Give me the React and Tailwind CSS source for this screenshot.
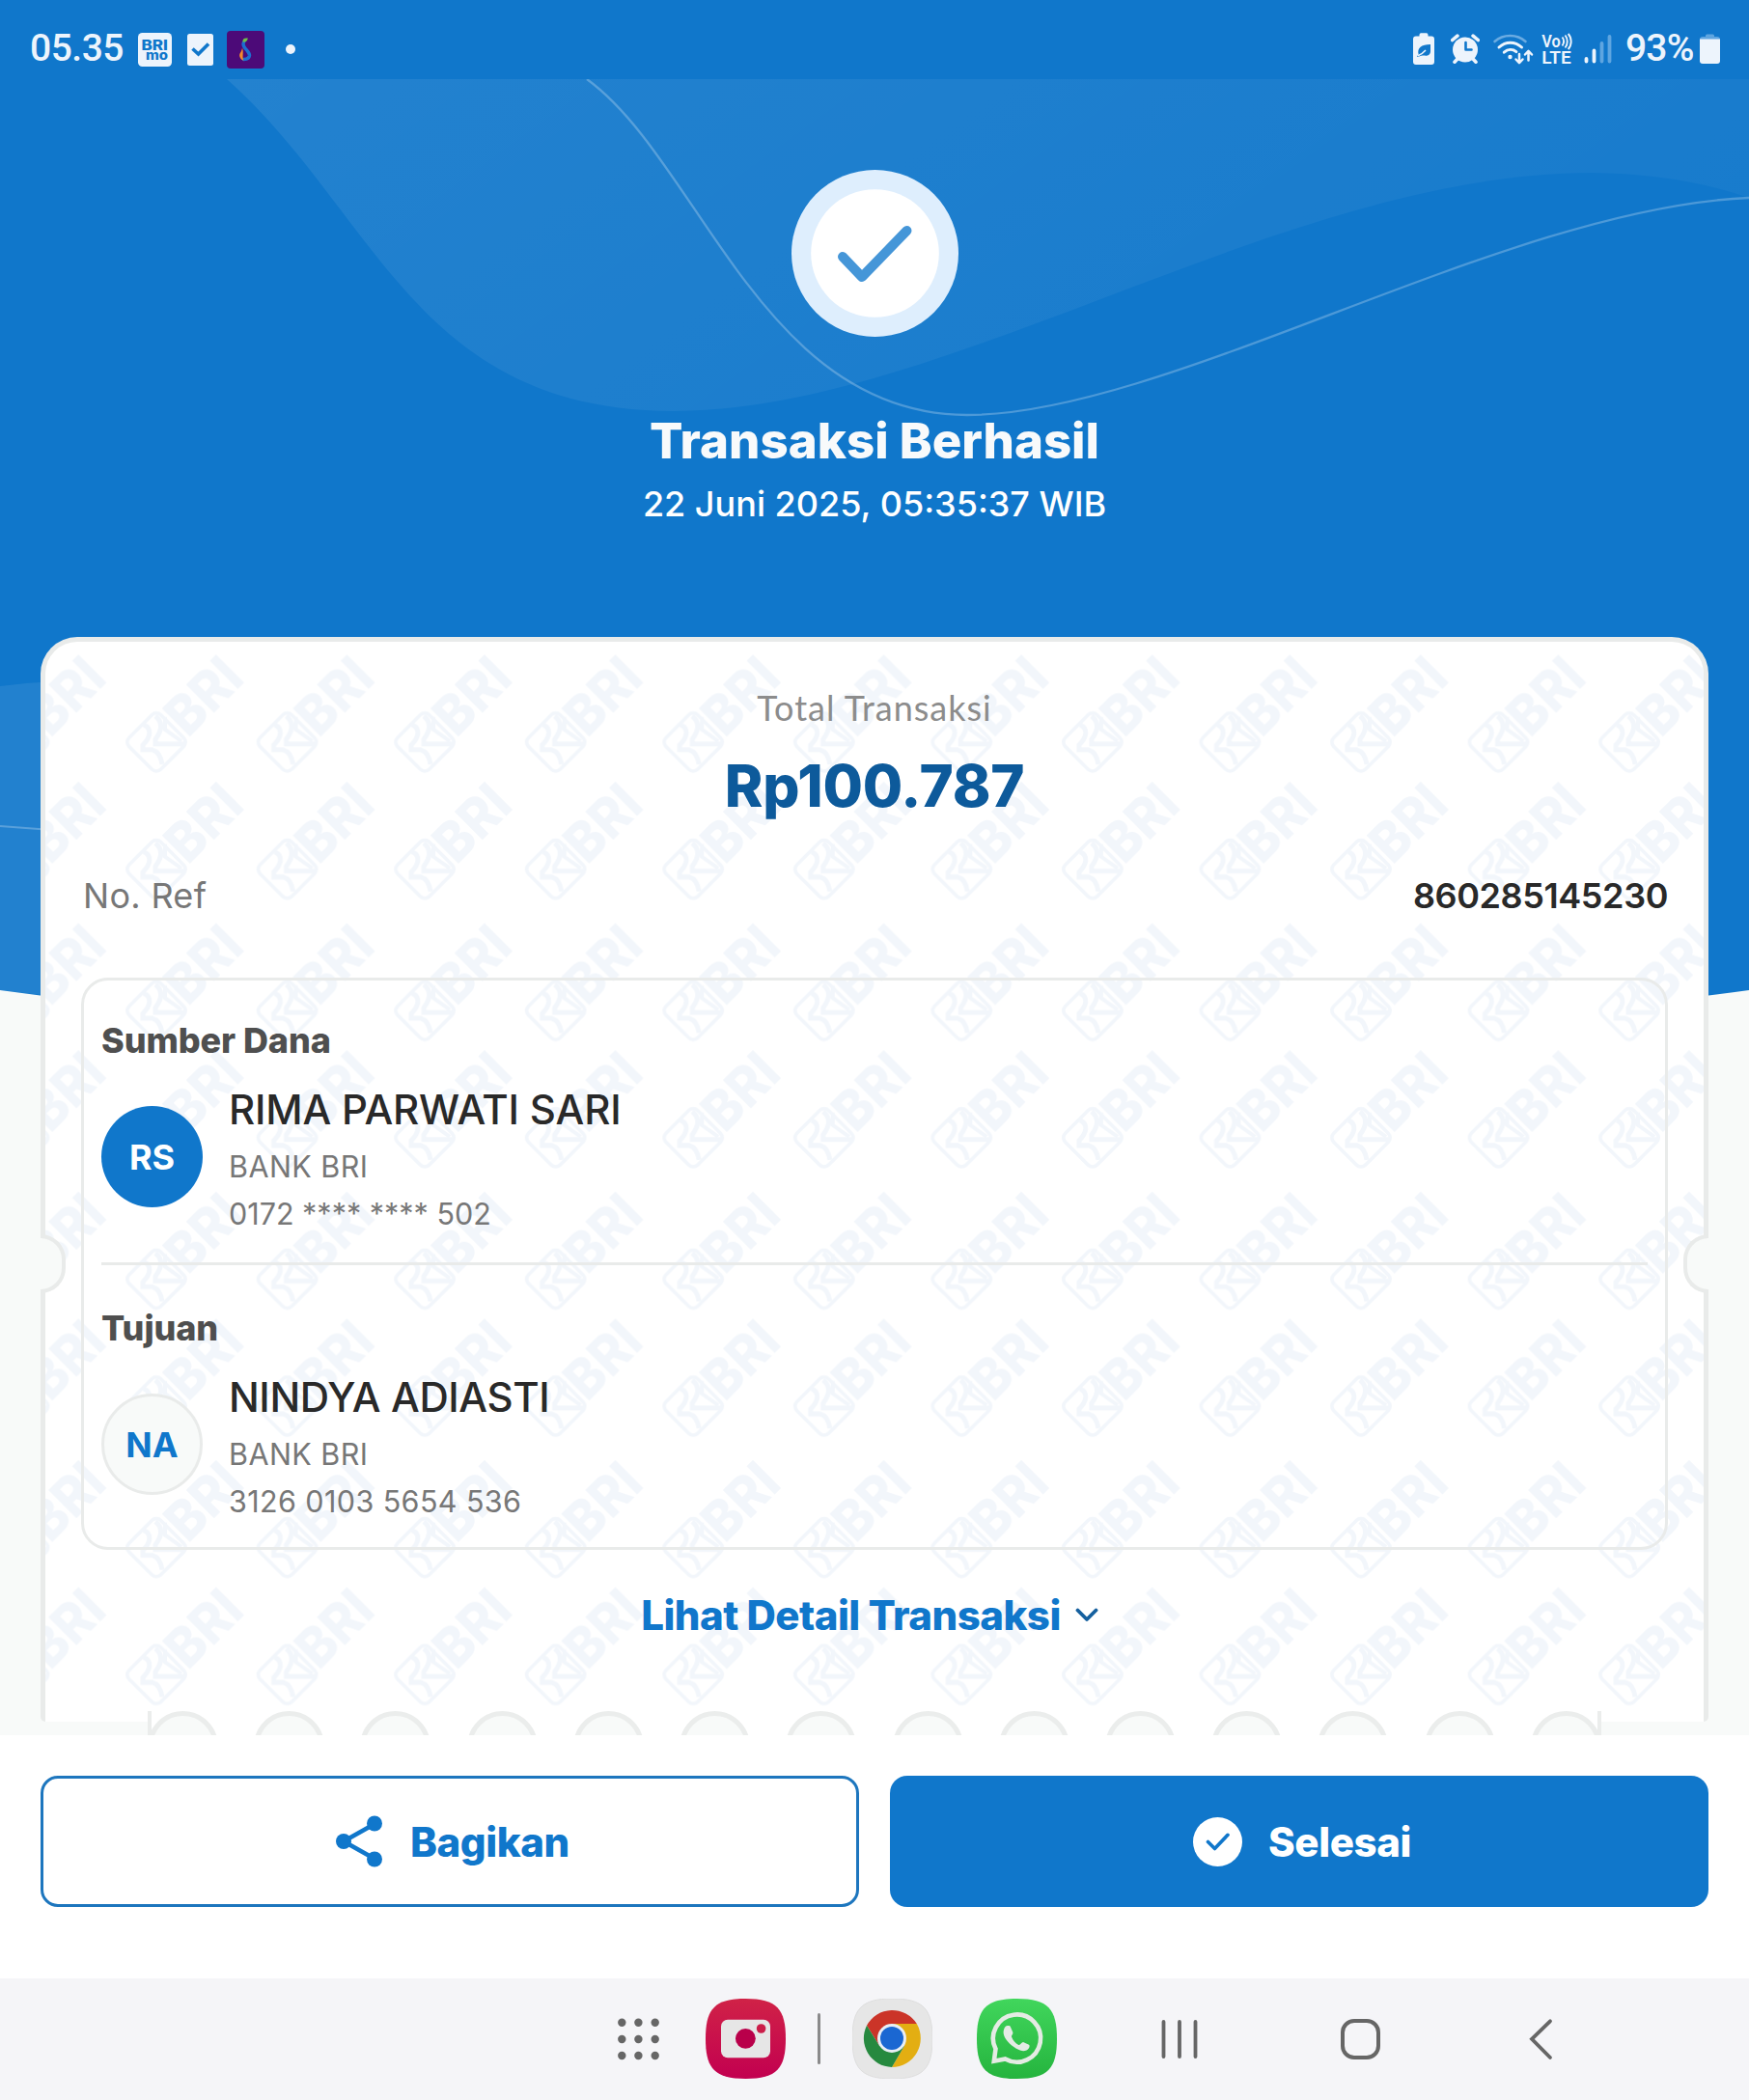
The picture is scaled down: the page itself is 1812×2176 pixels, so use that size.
const INTER = "font-['Inter',sans-serif]";

function StatusBar() {
  return (
    <header className="relative flex h-[82px] items-start bg-[#1077cb] font-['Roboto',sans-serif] text-[#edf4fc]">
      <span className="ml-[31px] mt-[26px] w-[112px] text-[39px] font-medium leading-[48px] tracking-[-0.5px]">05.35</span>
      <svg className="mt-[34px] h-[35px] w-[35px]" viewBox="143 34 35 35">
        <rect x="143" y="34" width="35" height="35" rx="4.5" fill="#edf4fc" />
        <text x="146.4" y="51.600" fontSize="14.500" fontWeight="800" textLength="27.5" lengthAdjust="spacingAndGlyphs" fill="#1077cb" fontFamily="Inter, sans-serif">BRI</text>
        <text x="151" y="62.4" fontSize="13" fontWeight="800" textLength="23" lengthAdjust="spacingAndGlyphs" fill="#1077cb" fontFamily="Inter, sans-serif">mo</text>
      </svg>
      <svg className="ml-4 mt-[35px] h-[33px] w-[27px]" viewBox="194 35 27 33">
        <rect x="194" y="35" width="27" height="33" rx="2.5" fill="#edf4fc" />
        <path d="M199.500 50.500l6 5.500 10.500-10.500" fill="none" stroke="#1077cb" strokeWidth="3.6" />
      </svg>
      <svg className="ml-3.5 mt-8 h-[39px] w-[39px]" viewBox="235 32 39 39">
        <rect x="235" y="32" width="39" height="39" rx="4" fill="#4c0a78" />
        <path d="M252.500 44C249.500 49 259 52.500 258.500 57.500C258 61 255 61.500 252.500 61.500" fill="none" stroke="#1d6fd0" strokeWidth="3.400" strokeLinecap="round" />
        <path d="M251 49.500C250.500 54 247.500 55 248.300 58.500C249 61 251 62.500 252.500 62.500C250.500 59 252.800 55 251 49.500Z" fill="#f58a2c" />
        <path d="M251.500 43.500C251 40.500 253 38.800 256.800 39.600C256.500 42.500 254.500 44 251.500 43.500Z" fill="#6fbf4a" />
      </svg>
      <span className="ml-[22px] mt-[46px] h-2.5 w-2.5 rounded-full bg-[#edf4fc]" />

      <div className="ml-auto flex items-start">
        <svg className="mt-[34px] h-[33px] w-[22px]" viewBox="1463 34 22 33">
          <path d="M1469.500 37.500V36a1.700 1.700 0 0 1 1.700-1.700h5.600a1.700 1.700 0 0 1 1.700 1.700v1.500h3.500a3 3 0 0 1 3 3V64a3 3 0 0 1-3 3h-16a3 3 0 0 1-3-3V40.500a3 3 0 0 1 3-3Z" fill="#edf4fc" />
          <path d="M1481 46v7c0 4-3.500 5.200-6.500 4.600c-2 0-4 .4-6.500 1.400c-.6.200-1.500-.7-.9-1.300l1.600-1.200c-1.800-6.500 2.800-10.500 12.300-10.500Z" fill="#1077cb" />
          <path d="M1467.500 58c3.500-1.500 6-3 8.500-6" fill="none" stroke="#edf4fc" strokeWidth="1.500" />
        </svg>
        <svg className="ml-[17px] mt-[34px] h-[33px] w-[30px]" viewBox="1501.500 34 30 33">
          <circle cx="1516.500" cy="51.500" r="13" fill="#edf4fc" />
          <path d="M1503.200 41.500l5.200-4.400M1529.800 41.500l-5.200-4.400M1508.500 61l-3 3.200M1524.500 61l3 3.200" stroke="#edf4fc" strokeWidth="3.600" strokeLinecap="round" />
          <path d="M1517 44v7.500h6" fill="none" stroke="#1077cb" strokeWidth="2.600" strokeLinecap="round" strokeLinejoin="round" />
        </svg>
        <svg className="ml-[13px] mt-[34px] h-[34px] w-[43px]" viewBox="1544.500 34 43 34" fill="none" strokeLinecap="round" stroke="#edf4fc">
          <path d="M1547 43c9-8 23-8 32 0" stroke="#6aabe2" strokeWidth="2.600" />
          <path d="M1551.500 49c7-6.500 16.500-6.500 23.500 0" strokeWidth="3" />
          <path d="M1556.800 54.200c4-3.400 9-3.400 12.600-.6" strokeWidth="3" />
          <circle cx="1563" cy="59" r="2.200" fill="#edf4fc" stroke="none" />
          <path d="M1572.500 56v8.500M1569 61.500l3.500 3.700 3.500-3.700M1582 62.500v-9M1578.500 56.500l3.500-3.700 3.500 3.700" strokeWidth="2.500" strokeLinejoin="round" />
        </svg>
        <svg className="ml-2 mt-[34px] h-[33px] w-[33px] overflow-visible" viewBox="1595.500 34 33 33" fontFamily="Roboto, sans-serif" fontWeight="600" fill="#edf4fc">
          <text x="1595.800" y="48.500" fontSize="17.500" textLength="19.500" lengthAdjust="spacingAndGlyphs">Vo</text>
          <path d="M1617 38.500c2 2.500 2 6 0 9M1620 36.500c3 3.500 3 9.500 0 13M1623.200 35c4 4.500 4 11.500 0 16" fill="none" stroke="#edf4fc" strokeWidth="1.900" />
          <text x="1595.800" y="66" fontSize="18" textLength="30.500" lengthAdjust="spacingAndGlyphs">LTE</text>
        </svg>
        <svg className="ml-[11px] mt-[35px] h-[31px] w-[29px]" viewBox="1639.500 35 29 31" strokeWidth="3.800" strokeLinecap="round">
          <path d="M1642 61v2.500M1650 52.500v11" stroke="#edf4fc" />
          <path d="M1658 45v18.500M1666 38v25.500" stroke="#5ea5e0" />
        </svg>
        <span className="ml-[14px] mt-[26px] w-[76px] text-[39px] font-medium leading-[48px] tracking-[-0.8px]">93%</span>
        <svg className="ml-[1px] mr-[30px] mt-[35px] h-[31px] w-[21px]" viewBox="1761 35 21 31">
          <path d="M1767 38v-1a1.500 1.500 0 0 1 1.500-1.500h6a1.500 1.500 0 0 1 1.500 1.500v1h3a3 3 0 0 1 3 3h-21a3 3 0 0 1 3-3Z" fill="#5ea5e0" />
          <path d="M1761 40.500h21V63a3 3 0 0 1-3 3h-15a3 3 0 0 1-3-3Z" fill="#edf4fc" />
        </svg>
      </div>
    </header>
  );
}

function HeroBackdrop() {
  return (
    <svg className="absolute left-0 top-0 h-[1100px] w-full" viewBox="0 0 1812 1100" aria-hidden="true">
      <defs>
        <linearGradient id="wave" x1="0" y1="0" x2="1" y2="0.3">
          <stop offset="0" stopColor="#fff" stopOpacity="0.08" />
          <stop offset="1" stopColor="#fff" stopOpacity="0.035" />
        </linearGradient>
      </defs>
      <path d="M0 0H1812V1026Q906 1150 0 1026Z" fill="#1077cb" />
      <path d="M235 82C390 220 430 426 698 426C980 426 1330 179 1650 179Q1740 180 1812 205V82Z" fill="url(#wave)" />
      <path d="M608 82C725 167 790 430 1002 430C1210 430 1560 215 1812 205" fill="none" stroke="#fff" strokeOpacity="0.25" strokeWidth="2.300" />
      <path d="M0 711Q30 707 60 706V1033L0 1026Z" fill="#fff" fillOpacity="0.08" />
      <path d="M0 856L60 860.500" stroke="#fff" strokeOpacity="0.25" strokeWidth="2" />
    </svg>
  );
}

function Watermark() {
  return (
    <svg className="absolute inset-0 h-full w-full" aria-hidden="true">
      <defs>
        <g id="bri-mark">
          <g transform="rotate(-45)">
            <rect x="-23.200" y="-23.200" width="46.400" height="46.400" rx="6.500" fill="none" stroke="#f2f6fb" strokeWidth="3.600" />
            <text x="25.800" y="20.500" fontFamily="Inter, sans-serif" fontWeight="800" fontSize="56.400" textLength="85" lengthAdjust="spacingAndGlyphs" fill="#f2f6fb">BRI</text>
          </g>
          <path d="M-13 -18C-4 -14 -6 -5 -14 3V8H-4C3 10 5 16 6 23" fill="none" stroke="#f2f6fb" strokeWidth="5" />
          <path d="M-1 -27C8 -20 5 -11 -1 -3V2H29" fill="none" stroke="#f2f6fb" strokeWidth="5" />
          <path d="M9 -26V-13L26 -1" fill="none" stroke="#f2f6fb" strokeWidth="4" />
        </g>
        <pattern id="bri-tile" x="70.200" y="7.500" width="278.100" height="278.200" patternUnits="userSpaceOnUse">
          <use href="#bri-mark" x="44.800" y="96.500" />
          <use href="#bri-mark" x="180.400" y="96.500" />
          <use href="#bri-mark" x="44.800" y="228.200" />
          <use href="#bri-mark" x="180.400" y="228.200" />
        </pattern>
      </defs>
      <rect width="100%" height="100%" fill="url(#bri-tile)" />
    </svg>
  );
}

function Party({ title, initials, avatarClass, name, nameClass, account, accountClass }) {
  return (
    <section>
      <h2 className="text-[36px] font-extrabold leading-[44px] tracking-[-0.1px] text-[#4f4f4f]">{title}</h2>
      <div className="mt-6 flex gap-[27px]">
        <div className={`mt-[22px] flex h-[105px] w-[105px] items-center justify-center rounded-full text-[36px] font-bold ${avatarClass}`}>{initials}</div>
        <div className="whitespace-nowrap">
          <p className={`text-[42px] font-medium leading-[52px] text-[#292929] ${nameClass}`}>{name}</p>
          <p className="mt-[13px] text-[30.500px] leading-[40px] tracking-[0.45px] text-[#777]">BANK BRI</p>
          <p className={`mt-[9px] text-[30.500px] leading-[40px] text-[#777] ${accountClass}`}>{account}</p>
        </div>
      </div>
    </section>
  );
}

function Receipt() {
  return (
    <main className="relative mx-[42px] h-[1124px] overflow-hidden rounded-b-[5px] rounded-t-[38px] border-x-[5px] border-t-[5px] border-[#e9ebea] bg-white">
      <Watermark />
      <div className="relative px-[37px] pt-[45px]">
        <p className="text-center font-['Lato',sans-serif] text-[36px] leading-[46px] tracking-[1px] text-[#8c8c8c]">Total Transaksi</p>
        <p className="mt-5 text-center text-[60px] font-extrabold leading-[76px] tracking-[-0.2px] text-[#0d5a9b]">Rp100.787</p>
        <div className="mt-[54px] flex justify-between pl-[2px] leading-[44px]">
          <span className="text-[36px] tracking-[0.3px] text-[#777]">No. Ref</span>
          <span className="text-[36px] font-semibold tracking-[-0.4px] text-[#292929]">860285145230</span>
        </div>
        <div className="mt-[63px] h-[593px] rounded-[28px] border-[3px] border-[#e9ebea] px-[18px] pt-10">
          <Party title="Sumber Dana" initials="RS" avatarClass="bg-[#1077cb] text-white" name="RIMA PARWATI SARI" nameClass="tracking-[-0.2px]" account="0172 **** **** 502" accountClass="" />
          <div className="mb-[43px] mt-[30px] h-[3px] bg-[#e9ebea]" />
          <Party title="Tujuan" initials="NA" avatarClass="border-[3px] border-[#e9ebea] bg-[#f8faf9] text-[#1077cb]" name="NINDYA ADIASTI" nameClass="tracking-[-0.4px]" account="3126 0103 5654 536" accountClass="tracking-[0.4px]" />
        </div>
        <button className="relative -left-[5px] mx-auto mt-[43px] flex items-center gap-[15px] text-[42px] font-extrabold leading-[50px] tracking-[-0.5px] text-[#1077cb]">
          Lihat Detail Transaksi
          <svg className="h-4 w-6" viewBox="0 0 24 16" fill="none" stroke="#15609f" strokeWidth="3.800" strokeLinecap="round" strokeLinejoin="round">
            <path d="M2.500 2.500l9.500 9.500 9.500-9.500" />
          </svg>
        </button>
      </div>
    </main>
  );
}

function Perforation() {
  return (
    <div className="absolute left-[153px] right-[153px] top-[1773px] flex h-[25px] items-start justify-between overflow-hidden bg-white shadow-[inset_4px_0_0_#ebedec,inset_-4px_0_0_#ebedec]">
      {Array.from({ length: 14 }, (_, i) => (
        <span key={i} className="h-[73px] w-[73px] rounded-full border-[5px] border-[#ebedec] bg-[#f8faf9]" />
      ))}
    </div>
  );
}

function Squircle({ fill, stroke }) {
  return <path d="M41.500 0C74 0 83 11 83 41.500S74 83 41.500 83 0 72 0 41.500 9 0 41.500 0Z" fill={fill} stroke={stroke} />;
}

function NavBar() {
  return (
    <nav className="relative flex h-[126px] bg-[#f5f5f8]">
      <svg className="ml-[638px] mt-[39px] h-12 w-12" viewBox="638 2089 48 48" fill="#666">
        {[2095.7, 2113, 2130].map((y) => [644.3, 661.4, 678.7].map((x) => <circle key={`${x}-${y}`} cx={x} cy={y} r="4.200" />))}
      </svg>
      <svg className="ml-[45px] mt-[21px] h-[83px] w-[83px]" viewBox="0 0 83 83">
        <defs>
          <linearGradient id="cam" x1="0" y1="0" x2="0" y2="1">
            <stop offset="0" stopColor="#d02247" />
            <stop offset="1" stopColor="#c20050" />
          </linearGradient>
        </defs>
        <Squircle fill="url(#cam)" />
        <rect x="16" y="21.700" width="51" height="39.500" rx="7" fill="#e6e6e6" />
        <circle cx="41.400" cy="41.300" r="10.400" fill="#b9004a" />
        <circle cx="57.600" cy="31" r="4.800" fill="#cb1d49" />
      </svg>
      <span className="ml-[33px] mt-9 h-[53px] w-[3px] rounded-full bg-[#8a8a8b]" />
      <svg className="ml-[33px] mt-[21px] h-[83px] w-[83px]" viewBox="0 0 83 83">
        <Squircle fill="#e6e6e6" stroke="#dedede" />
        <path d="M15 27.700A30 30 0 0 1 66.800 26H41L28 48.700Z" fill="#cb3428" />
        <path d="M66.800 26A30 30 0 0 1 41 71L54 48.700L41 26Z" fill="#e3ae12" />
        <path d="M41 71A30 30 0 0 1 15 27.700L28 48.700H54Z" fill="#26893f" />
        <circle cx="41" cy="41" r="15" fill="#e9eef5" />
        <circle cx="41" cy="41" r="12" fill="#1a67d2" />
      </svg>
      <svg className="ml-[46px] mt-[21px] h-[83px] w-[83px]" viewBox="0 0 83 83">
        <defs>
          <linearGradient id="wa" x1="0" y1="0" x2="0" y2="1">
            <stop offset="0" stopColor="#41d65c" />
            <stop offset="1" stopColor="#25b43e" />
          </linearGradient>
        </defs>
        <Squircle fill="url(#wa)" />
        <path d="M19.500 52A24.600 24.600 0 1 1 29.500 62.500L17.800 64.700Z" fill="none" stroke="#e4ebe4" strokeWidth="4.600" />
        <path d="M27.600 34C28 30.500 29.500 28.300 31.500 28C33.500 27.700 34.500 28 35 29.500L37.400 35C37.800 36.500 35.500 38.500 36 39.500C37.500 43.500 40 46 43.300 48C45 48.800 46.500 44.500 48.500 45.200L54 47.800C55.500 49 54 52.500 51.500 53.500C47 55.500 42.500 53 38 49.800C32.500 46 27 39.500 27.600 34Z" fill="#e4ebe4" />
      </svg>
      <svg className="ml-[107px] mt-[42px] h-[42px] w-[40px]" viewBox="1202 2092 40 42" stroke="#666" strokeWidth="3.800" strokeLinecap="round">
        <path d="M1205.500 2095v36M1222 2095v36M1238.500 2095v36" />
      </svg>
      <span className="ml-[147px] mt-[42px] h-[42px] w-[41px] rounded-[14px] border-[4px] border-[#666]" />
      <svg className="ml-[153px] mt-[41px] h-[44px] w-[28px]" viewBox="1583 2091 28 44" fill="none" stroke="#666" strokeWidth="3.800" strokeLinecap="round">
        <path d="M1606 2094.300L1587 2112.800L1606 2132" />
      </svg>
    </nav>
  );
}

export default function App() {
  return (
    <div className={`relative flex h-[2176px] w-[1812px] flex-col overflow-hidden bg-[#f8faf9] ${INTER}`}>
      <HeroBackdrop />
      <StatusBar />
      <div className="relative flex h-[578px] flex-col items-center text-white">
        <svg className="mt-[94px] h-[173px] w-[173px]" viewBox="0 0 173 173">
          <circle cx="86.500" cy="86.500" r="86.500" fill="#deeefd" />
          <circle cx="86.500" cy="86.500" r="66.300" fill="#fff" />
          <path d="M53 90l20 21L119.500 63" fill="none" stroke="#4596d8" strokeWidth="10" strokeLinecap="round" strokeLinejoin="round" />
        </svg>
        <h1 className="mt-[77px] text-[51px] font-extrabold leading-[62px] text-[#f8fafb]">Transaksi Berhasil</h1>
        <p className="mt-3 text-[36px] font-[450] leading-[44px]">22 Juni 2025, 05:35:37 WIB</p>
      </div>
      <Receipt />
      <span className="absolute left-[42px] top-[1279px] h-[61px] w-[26px] rounded-r-[30px] border-y-4 border-r-4 border-[#e9ebea] bg-[#f8faf9]" />
      <span className="absolute right-[42px] top-[1279px] h-[61px] w-[26px] rounded-l-[30px] border-y-4 border-l-4 border-[#e9ebea] bg-[#f8faf9]" />
      <Perforation />
      <footer className="relative mt-[14px] grid h-[252px] grid-cols-2 gap-8 bg-white px-[42px] pt-[42px] text-[42px] font-extrabold tracking-[-0.4px]">
        <button className="flex h-[136px] items-center rounded-[18px] border-[3px] border-[#1d76be] text-[#1077cb]">
          <svg className="ml-[303px] h-[54px] w-[48px]" viewBox="0 0 48 54" fill="#1077cb">
            <path d="M40 9L8 27l32 18" fill="none" stroke="#1077cb" strokeWidth="4.600" />
            <circle cx="40" cy="8.500" r="8" />
            <circle cx="8" cy="27" r="8" />
            <circle cx="40" cy="45.500" r="8" />
          </svg>
          <span className="ml-[29px]">Bagikan</span>
        </button>
        <button className="flex h-[136px] items-center rounded-[18px] bg-[#1077cb] text-white">
          <svg className="ml-[314px] h-[51px] w-[51px]" viewBox="0 0 51 51">
            <circle cx="25.500" cy="25.500" r="25.500" fill="#fff" />
            <path d="M15.500 25.500l7 7L36 18.300" fill="none" stroke="#1077cb" strokeWidth="3.600" strokeLinecap="round" strokeLinejoin="round" />
          </svg>
          <span className="ml-[27px]">Selesai</span>
        </button>
      </footer>
      <NavBar />
    </div>
  );
}
